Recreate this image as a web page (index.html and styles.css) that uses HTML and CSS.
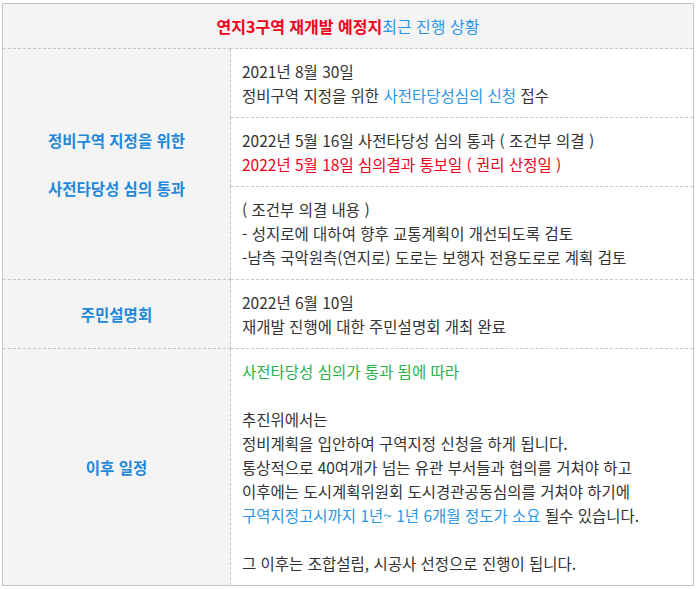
FILE: index.html
```html
<!DOCTYPE html>
<html lang="ko">
<head>
<meta charset="utf-8">
<title>연지3구역 재개발 예정지 최근 진행 상황</title>
<link rel="stylesheet" href="styles.css">
</head>
<body>
<div class="wrap">
<table class="status">
  <colgroup>
    <col class="col-label">
    <col class="col-content">
  </colgroup>
  <thead>
    <tr>
      <th colspan="2" class="title"><span class="red-bold">연지3구역 재개발 예정지</span><span class="blue">최근 진행 상황</span></th>
    </tr>
  </thead>
  <tbody>
    <tr>
      <td class="label" rowspan="3">정비구역 지정을 위한<br><br>사전타당성 심의 통과</td>
      <td class="content">2021년 8월 30일<br>정비구역 지정을 위한 <span class="blue">사전타당성심의 신청</span> 접수</td>
    </tr>
    <tr>
      <td class="content">2022년 5월 16일 사전타당성 심의 통과 ( 조건부 의결 )<br><span class="red">2022년 5월 18일 심의결과 통보일 ( 권리 산정일 )</span></td>
    </tr>
    <tr>
      <td class="content">( 조건부 의결 내용 )<br>- 성지로에 대하여 향후 교통계획이 개선되도록 검토<br>-남측 국악원측(연지로) 도로는 보행자 전용도로로 계획 검토</td>
    </tr>
    <tr>
      <td class="label">주민설명회</td>
      <td class="content">2022년 6월 10일<br>재개발 진행에 대한 주민설명회 개최 완료</td>
    </tr>
    <tr>
      <td class="label">이후 일정</td>
      <td class="content"><span class="green">사전타당성 심의가 통과 됨에 따라</span><br><br>추진위에서는<br>정비계획을 입안하여 구역지정 신청을 하게 됩니다.<br>통상적으로 40여개가 넘는 유관 부서들과 협의를 거쳐야 하고<br>이후에는 도시계획위원회 도시경관공동심의를 거쳐야 하기에<br><span class="blue">구역지정고시까지 1년~ 1년 6개월 정도가 소요</span> 될수 있습니다.<br><br>그 이후는 조합설립, 시공사 선정으로 진행이 됩니다.</td>
    </tr>
  </tbody>
</table>
</div>
</body>
</html>
```
FILE: styles.css
```css
html, body {
  margin: 0;
  padding: 0;
  background: #ffffff;
}
body {
  font-family: "Noto Sans CJK KR", "Noto Sans", sans-serif;
  color: #333333;
}
.wrap {
  padding: 3px 3px 0 2px;
}
.status {
  width: 692px;
  border-collapse: collapse;
  border: 1px solid #c4c4c4;
  table-layout: fixed;
}
.col-label {
  width: 228px;
}
.status td, .status th {
  border: 1px dashed #c8c8c8;
  font-size: 15.5px;
  line-height: 24px;
  padding: 10px 11px;
  vertical-align: middle;
  white-space: nowrap;
}
.status th.title {
  background: #f4f4f4;
  text-align: center;
  font-weight: normal;
  font-size: 16px;
  border-top: 1px solid #c4c4c4;
  border-left: 1px solid #c4c4c4;
  border-right: 1px solid #c4c4c4;
}
.status td.label {
  background: #f4f4f4;
  text-align: center;
  font-weight: bold;
  color: #1e88db;
  border-left: 1px solid #c4c4c4;
}
.status td.content {
  text-align: left;
  border-right: 1px solid #c4c4c4;
}
.status tr:last-child td {
  border-bottom: 1px solid #c4c4c4;
}
.red-bold {
  color: #f0001c;
  font-weight: bold;
}
.red {
  color: #f0001c;
}
.blue {
  color: #2a96e6;
}
.green {
  color: #2bb04a;
}
```
